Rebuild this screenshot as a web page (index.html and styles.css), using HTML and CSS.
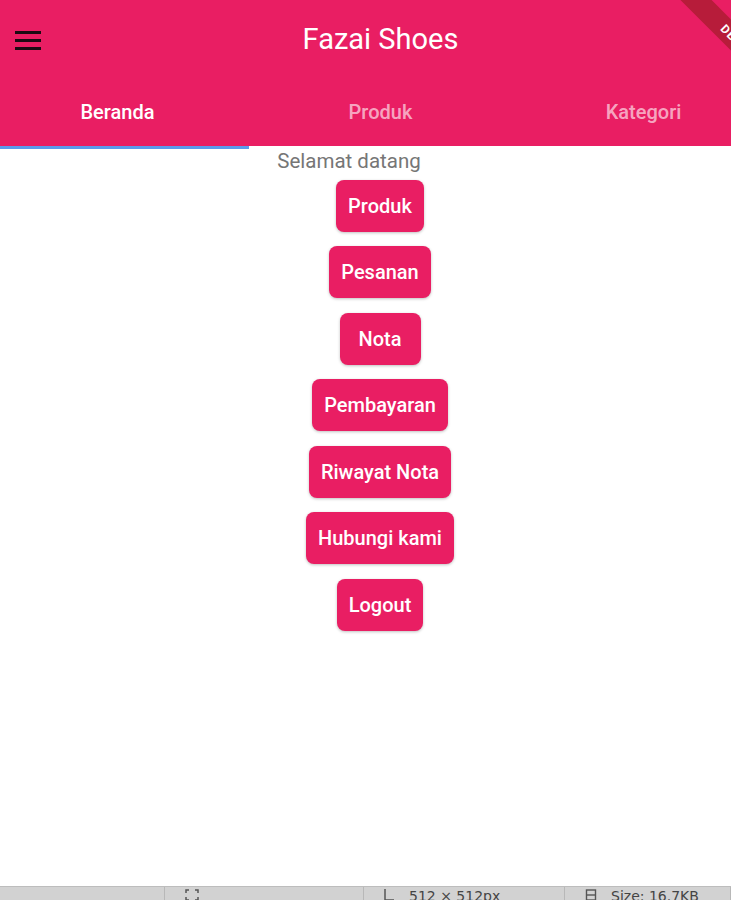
FILE: index.html
```html
<!DOCTYPE html>
<html>
<head>
<meta charset="utf-8">
<link rel="stylesheet" href="styles.css">
</head>
<body>
<div class="screen">
  <header class="appbar">
    <div class="toolbar">
      <button class="menu-btn" aria-label="menu">
        <svg width="28" height="22" viewBox="0 0 28 22"><rect x="1" y="2" width="26" height="3" fill="#1b0a12"/><rect x="1" y="10" width="26" height="3" fill="#1b0a12"/><rect x="1" y="18" width="26" height="3" fill="#1b0a12"/></svg>
      </button>
      <h1 class="title">Fazai Shoes</h1>
    </div>
    <nav class="tabs">
      <div class="tab active">Beranda</div>
      <div class="tab">Produk</div>
      <div class="tab">Kategori</div>
    </nav>
    <div class="debug"><span>DEBUG</span></div>
  </header>
  <div class="indicator-row"><div class="indicator"></div></div>
  <main class="content">
    <p class="welcome">Selamat datang</p>
    <button class="btn">Produk</button>
    <button class="btn">Pesanan</button>
    <button class="btn">Nota</button>
    <button class="btn">Pembayaran</button>
    <button class="btn">Riwayat Nota</button>
    <button class="btn">Hubungi kami</button>
    <button class="btn">Logout</button>
  </main>
  <footer class="statusbar">
    <div class="seg seg1"></div>
    <div class="seg seg2"><svg width="16" height="14" viewBox="0 0 16 14"><path d="M2 5V2h3M11 2h3v3M2 9v3h3M11 12h3V9" stroke="#555" stroke-width="1.5" fill="none"/></svg></div>
    <div class="seg seg3"><svg width="12" height="14" viewBox="0 0 12 14"><path d="M2 1v11h9" stroke="#555" stroke-width="1.5" fill="none"/></svg><span>512 × 512px</span></div>
    <div class="seg seg4"><svg width="12" height="14" viewBox="0 0 12 14"><rect x="1.5" y="2" width="9" height="10" stroke="#555" stroke-width="1.4" fill="none"/><path d="M1.5 7h9" stroke="#555" stroke-width="1.4"/></svg><span>Size: 16.7KB</span></div>
  </footer>
</div>
</body>
</html>
```

FILE: styles.css
```css
* { box-sizing: border-box; }
html, body { margin: 0; padding: 0; background: #ffffff; }
body { font-family: Roboto, "Noto Sans", Arial, sans-serif; }

.screen {
  width: 731px;
  height: 900px;
  display: flex;
  flex-direction: column;
  background: #ffffff;
  overflow: hidden;
}

.appbar {
  position: relative;
  background: #e91e63;
  height: 146px;
  display: flex;
  flex-direction: column;
  overflow: hidden;
}

.toolbar {
  height: 80px;
  display: flex;
  align-items: center;
  position: relative;
}

.menu-btn {
  background: none;
  border: 0;
  padding: 0;
  margin-left: 14px;
  width: 28px;
  height: 22px;
  display: flex;
}

.title {
  margin: 0 0 0 -41px;
  flex: 1;
  padding-left: 29px;
  text-align: center;
  color: #ffffff;
  font-weight: 400;
  font-size: 29px;
  letter-spacing: 0;
  padding-bottom: 2px;
}

.tabs {
  display: grid;
  grid-template-columns: repeat(3, 263px);
  margin-left: -14px;
  height: 66px;
  align-items: center;
}

.tab {
  text-align: center;
  color: rgba(255, 255, 255, 0.62);
  font-size: 20px;
  font-weight: 500;
  padding-bottom: 2px;
}
.tab.active { color: #ffffff; }

.debug {
  position: absolute;
  top: 31px;
  right: -107px;
  width: 200px;
  height: 22px;
  background: #b71c3a;
  transform: rotate(45deg);
  display: flex;
  align-items: center;
  justify-content: center;
}
.debug span {
  color: #fff;
  font-size: 12px;
  font-weight: 700;
  letter-spacing: 1px;
}

.indicator-row { height: 3px; display: flex; }
.indicator { width: 249px; height: 3px; background: #5b9bec; }

.content {
  flex: 1;
  display: flex;
  flex-direction: column;
  align-items: center;
  padding-left: 29px;
  gap: 14.5px;
}

.welcome {
  margin: 1px 62px -7px 0;
  color: #767676;
  font-size: 20.5px;
  line-height: 22px;
  height: 22px;
}

.btn {
  height: 52px;
  min-width: 81px;
  border: 0;
  border-radius: 8px;
  background: #e91e63;
  color: #fff;
  font-family: Roboto, "Noto Sans", Arial, sans-serif;
  font-size: 20px;
  font-weight: 500;
  padding: 0 12px;
  box-shadow: 0 1px 3px rgba(0, 0, 0, 0.25);
}

.statusbar {
  height: 14px;
  background: #d2d2d2;
  border-top: 1px solid #bdbdbd;
  display: flex;
  overflow: hidden;
  color: #444;
  font-family: "DejaVu Sans", sans-serif;
  font-size: 14px;
}
.seg { display: flex; align-items: flex-start; gap: 14px; border-right: 1px solid #b8b8b8; padding-top: 1px; }
.seg1 { width: 165px; }
.seg2 { width: 199px; padding-left: 19px; }
.seg3 { width: 201px; padding-left: 19px; }
.seg4 { width: 166px; padding-left: 20px; border-right: 1px solid #b8b8b8; }
.seg span { line-height: 14px; margin-top: 1px; }
```
